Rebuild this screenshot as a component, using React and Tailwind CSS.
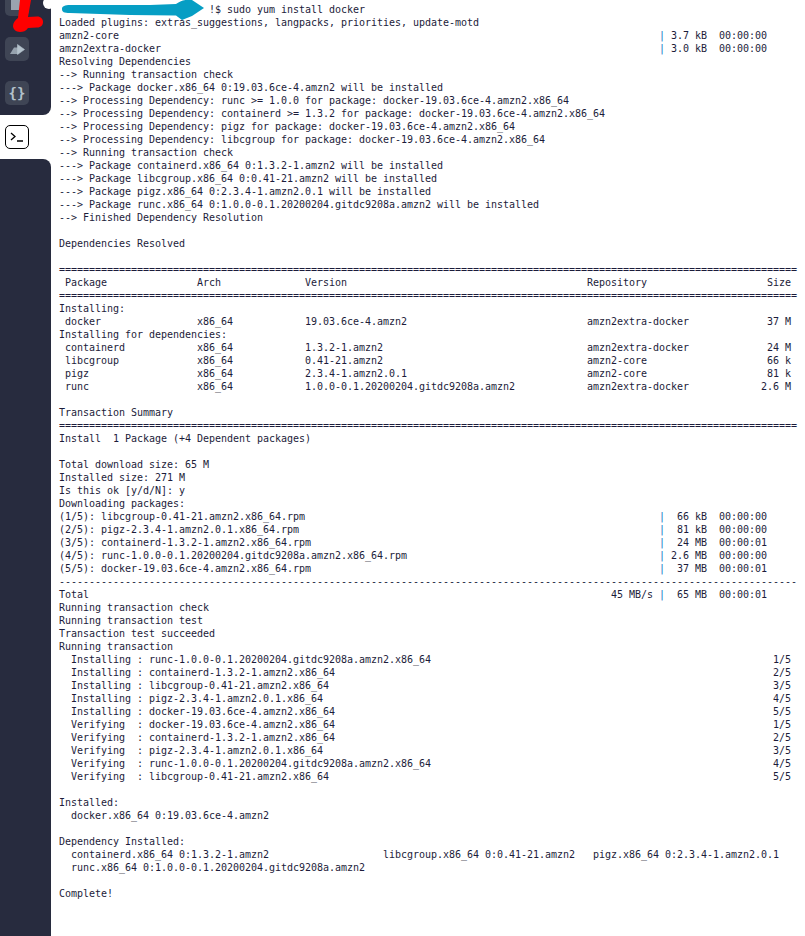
const col = (s, n) => s.padEnd(n, " ");

const HR_DOUBLE = "=".repeat(123);
const HR_SINGLE = "-".repeat(123);

const pkgRow = (name, arch, version, repo, size) =>
  " " + col(name, 22) + col(arch, 18) + col(version, 47) + col(repo, 17) + size.padStart(17, " ");

const repoRow = (name, size) => [col(name, 100), " " + size.padStart(6, " ") + "  00:00:00"];
const dlRow = (name, size, time) => [col(name, 100), " " + size.padStart(6, " ") + "  " + time];
const stepRow = (text, step) => col("  " + text, 119) + step;

const LINES = [
  col("", 25) + "!$ sudo yum install docker",
  "Loaded plugins: extras_suggestions, langpacks, priorities, update-motd",
  repoRow("amzn2-core", "3.7 kB"),
  repoRow("amzn2extra-docker", "3.0 kB"),
  "Resolving Dependencies",
  "--> Running transaction check",
  "---> Package docker.x86_64 0:19.03.6ce-4.amzn2 will be installed",
  "--> Processing Dependency: runc >= 1.0.0 for package: docker-19.03.6ce-4.amzn2.x86_64",
  "--> Processing Dependency: containerd >= 1.3.2 for package: docker-19.03.6ce-4.amzn2.x86_64",
  "--> Processing Dependency: pigz for package: docker-19.03.6ce-4.amzn2.x86_64",
  "--> Processing Dependency: libcgroup for package: docker-19.03.6ce-4.amzn2.x86_64",
  "--> Running transaction check",
  "---> Package containerd.x86_64 0:1.3.2-1.amzn2 will be installed",
  "---> Package libcgroup.x86_64 0:0.41-21.amzn2 will be installed",
  "---> Package pigz.x86_64 0:2.3.4-1.amzn2.0.1 will be installed",
  "---> Package runc.x86_64 0:1.0.0-0.1.20200204.gitdc9208a.amzn2 will be installed",
  "--> Finished Dependency Resolution",
  "",
  "Dependencies Resolved",
  "",
  HR_DOUBLE,
  pkgRow("Package", "Arch", "Version", "Repository", "Size"),
  HR_DOUBLE,
  "Installing:",
  pkgRow("docker", "x86_64", "19.03.6ce-4.amzn2", "amzn2extra-docker", "37 M"),
  "Installing for dependencies:",
  pkgRow("containerd", "x86_64", "1.3.2-1.amzn2", "amzn2extra-docker", "24 M"),
  pkgRow("libcgroup", "x86_64", "0.41-21.amzn2", "amzn2-core", "66 k"),
  pkgRow("pigz", "x86_64", "2.3.4-1.amzn2.0.1", "amzn2-core", "81 k"),
  pkgRow("runc", "x86_64", "1.0.0-0.1.20200204.gitdc9208a.amzn2", "amzn2extra-docker", "2.6 M"),
  "",
  "Transaction Summary",
  HR_DOUBLE,
  "Install  1 Package (+4 Dependent packages)",
  "",
  "Total download size: 65 M",
  "Installed size: 271 M",
  "Is this ok [y/d/N]: y",
  "Downloading packages:",
  dlRow("(1/5): libcgroup-0.41-21.amzn2.x86_64.rpm", "66 kB", "00:00:00"),
  dlRow("(2/5): pigz-2.3.4-1.amzn2.0.1.x86_64.rpm", "81 kB", "00:00:00"),
  dlRow("(3/5): containerd-1.3.2-1.amzn2.x86_64.rpm", "24 MB", "00:00:01"),
  dlRow("(4/5): runc-1.0.0-0.1.20200204.gitdc9208a.amzn2.x86_64.rpm", "2.6 MB", "00:00:00"),
  dlRow("(5/5): docker-19.03.6ce-4.amzn2.x86_64.rpm", "37 MB", "00:00:01"),
  HR_SINGLE,
  [col("Total", 92) + "45 MB/s ", "  65 MB  00:00:01"],
  "Running transaction check",
  "Running transaction test",
  "Transaction test succeeded",
  "Running transaction",
  stepRow("Installing : runc-1.0.0-0.1.20200204.gitdc9208a.amzn2.x86_64", "1/5"),
  stepRow("Installing : containerd-1.3.2-1.amzn2.x86_64", "2/5"),
  stepRow("Installing : libcgroup-0.41-21.amzn2.x86_64", "3/5"),
  stepRow("Installing : pigz-2.3.4-1.amzn2.0.1.x86_64", "4/5"),
  stepRow("Installing : docker-19.03.6ce-4.amzn2.x86_64", "5/5"),
  stepRow("Verifying  : docker-19.03.6ce-4.amzn2.x86_64", "1/5"),
  stepRow("Verifying  : containerd-1.3.2-1.amzn2.x86_64", "2/5"),
  stepRow("Verifying  : pigz-2.3.4-1.amzn2.0.1.x86_64", "3/5"),
  stepRow("Verifying  : runc-1.0.0-0.1.20200204.gitdc9208a.amzn2.x86_64", "4/5"),
  stepRow("Verifying  : libcgroup-0.41-21.amzn2.x86_64", "5/5"),
  "",
  "Installed:",
  "  docker.x86_64 0:19.03.6ce-4.amzn2",
  "",
  "Dependency Installed:",
  "  containerd.x86_64 0:1.3.2-1.amzn2                   libcgroup.x86_64 0:0.41-21.amzn2   pigz.x86_64 0:2.3.4-1.amzn2.0.1",
  "  runc.x86_64 0:1.0.0-0.1.20200204.gitdc9208a.amzn2",
  "",
  "Complete!",
];

const TermLine = ({ line }) => {
  if (Array.isArray(line)) {
    return (
      <div className="h-[13px]">
        {line[0]}
        <span className="text-[#0a6fc2]">|</span>
        {line[1]}
      </div>
    );
  }
  return <div className="h-[13px]">{line}</div>;
};

const IconBox = ({ children }) => (
  <div className="flex h-6 w-6 items-center justify-center rounded-[5px] bg-[#3f4555] text-[#b4c2cc]">
    {children}
  </div>
);

const App = () => {
  return (
    <div className="relative flex h-[936px] w-[805px] overflow-hidden bg-white">
      <aside className="flex w-[51px] shrink-0 flex-col">
        <div className="flex h-[115px] flex-col gap-[20px] rounded-br-lg bg-[#272b3e] pl-[5px] pt-[37px]">
          <IconBox>
            <svg width="15" height="11" viewBox="0 0 15 11" fill="currentColor">
              <path d="M0 10L4 3.5H8.5V10z" opacity="0.75" />
              <path d="M7.5 0.5L14.5 5.5L7.5 10.5z" stroke="currentColor" strokeWidth="0.6" strokeLinejoin="round" />
            </svg>
          </IconBox>
          <IconBox>
            <span className="font-['DejaVu_Sans_Mono',monospace] text-[14px] font-bold">{"{}"}</span>
          </IconBox>
        </div>
        <div className="flex h-11 items-center pl-[5px]">
          <div className="flex h-6 w-6 items-center justify-center rounded-[5px] border border-black bg-white">
            <svg width="14" height="10" viewBox="0 0 14 10" fill="none" stroke="black" strokeWidth="1.3">
              <path d="M1 1l4 3.5L1 8M7 9h6" />
            </svg>
          </div>
        </div>
        <div className="flex-1 rounded-tr-lg bg-[#272b3e]" />
      </aside>

      <main className="min-w-0 flex-1 overflow-hidden whitespace-pre pl-2 pt-[3px] font-['DejaVu_Sans_Mono',monospace] text-[10px] leading-[13px] tracking-[-0.02px] text-[#1c1c3a]">
        {LINES.map((line, i) => (
          <TermLine key={i} line={line} />
        ))}
      </main>

      {/* file icon cut off at the top of the rail */}
      <div className="absolute left-[5px] top-0 h-4 w-6 rounded-b-[5px] bg-[#3f4555]" />
      <div className="absolute left-[11px] top-0 h-[10px] w-3 bg-[#9aa3af]" />
      {/* corner of the terminal pane */}
      <div className="absolute left-[43px] top-[-3px] h-3 w-3 rounded-full bg-white" />

      {/* scribbles over the screenshot */}
      <svg className="absolute left-0 top-0" width="260" height="40" viewBox="0 0 260 40" fill="#ff0000">
        <path d="M20 0H31L28 17L37 16.500C41 16.500 43 19 43 22C43 25 41 27.500 37 27.500L28 28C26 31 23 32 20 32C16 32 13 29 13 26C13 23 15 20 18 18z" />
        <path d="M62 9C62 6 65 5 70 5L150 5L176 4C180 1 186 -1 192 0L204 8L192 16L182 20L176 15.500L130 15L70 13C64 13 62 12 62 9z" fill="#069ec4" />
      </svg>
    </div>
  );
};

export default App;
